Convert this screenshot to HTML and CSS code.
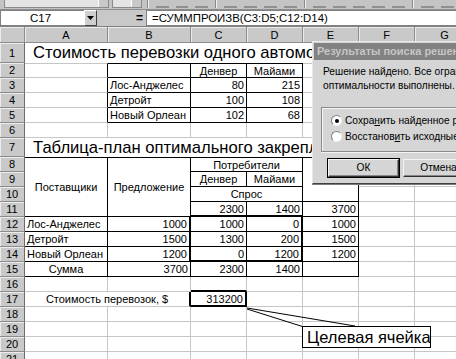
FILE: index.html
```html
<!DOCTYPE html>
<html lang="ru">
<head>
<meta charset="utf-8">
<title>Excel — Поиск решения</title>
<link rel="stylesheet" href="styles.css">
</head>
<body>
<div class="app">
  <div class="toolbar">
    <div class="tb-combo font-combo"><span class="tb-arrow"></span></div>
    <div class="tb-combo size-combo"><span class="tb-arrow"></span></div>
    <div class="tb-sep"></div>
    <div class="tb-btn"></div><div class="tb-btn"></div><div class="tb-btn"></div>
    <div class="tb-sep"></div>
    <div class="tb-btn"></div><div class="tb-btn"></div><div class="tb-btn"></div><div class="tb-btn"></div>
    <div class="tb-sep"></div>
    <div class="tb-btn"></div><div class="tb-btn"></div><div class="tb-btn"></div><div class="tb-btn"></div><div class="tb-btn"></div>
    <div class="tb-sep"></div>
    <div class="tb-btn"></div><div class="tb-btn"></div>
  </div>

  <div class="formula-bar">
    <div class="namebox">C17</div>
    <div class="nb-btn"><svg width="7" height="4" viewBox="0 0 7 4"><path d="M0 0h7L3.5 4z" fill="#000"/></svg></div>
    <div class="fx-gap"></div>
    <div class="fx-eq">=</div>
    <div class="fx">=СУММПРОИЗВ(C3:D5;C12:D14)</div>
  </div>

  <div class="sheet">
    <div class="corner"></div>
    <div class="ch">A</div><div class="ch">B</div><div class="ch">C</div><div class="ch">D</div><div class="ch">E</div><div class="ch">F</div><div class="ch">G</div>

    <div class="rh">1</div>
    <div class="c title span7">Стоимость перевозки одного автомобиля</div>

    <div class="rh">2</div>
    <div class="c t r"></div><div class="c tk r b"></div><div class="c tk r b ctr">Денвер</div><div class="c tk r b ctr">Майами</div><div class="c t"></div><div class="c t"></div><div class="c t"></div>

    <div class="rh">3</div>
    <div class="c r"></div><div class="c r b">Лос-Анджелес</div><div class="c r b num">80</div><div class="c r b num">215</div><div class="c"></div><div class="c"></div><div class="c"></div>

    <div class="rh">4</div>
    <div class="c r"></div><div class="c r b">Детройт</div><div class="c r b num">100</div><div class="c r b num">108</div><div class="c"></div><div class="c"></div><div class="c"></div>

    <div class="rh">5</div>
    <div class="c r"></div><div class="c r b">Новый Орлеан</div><div class="c r b num">102</div><div class="c r b num">68</div><div class="c"></div><div class="c"></div><div class="c"></div>

    <div class="rh">6</div>
    <div class="c"></div><div class="c"></div><div class="c"></div><div class="c"></div><div class="c"></div><div class="c"></div><div class="c"></div>

    <div class="rh">7</div>
    <div class="c title span7">Таблица-план оптимального закрепления</div>

    <div class="rh">8</div>
    <div class="c tk r b ctr rs4">Поставщики</div>
    <div class="c tk r b ctr rs4">Предложение</div>
    <div class="c tk r b ctr cs2">Потребители</div>
    <div class="c tk r b rs3"></div>
    <div class="c t"></div><div class="c t"></div>

    <div class="rh">9</div>
    <div class="c r b ctr">Денвер</div><div class="c r b ctr">Майами</div><div class="c"></div><div class="c"></div>

    <div class="rh">10</div>
    <div class="c r b ctr cs2">Спрос</div><div class="c"></div><div class="c"></div>

    <div class="rh">11</div>
    <div class="c r B num">2300</div><div class="c r B num">1400</div><div class="c r b num">3700</div><div class="c"></div><div class="c"></div>

    <div class="rh">12</div>
    <div class="c r b">Лос-Анджелес</div><div class="c R b num">1000</div><div class="c r b num">1000</div><div class="c R b num">0</div><div class="c r b num">1000</div><div class="c"></div><div class="c"></div>

    <div class="rh">13</div>
    <div class="c r b">Детройт</div><div class="c R b num">1500</div><div class="c r b num">1300</div><div class="c R b num">200</div><div class="c r b num">1500</div><div class="c"></div><div class="c"></div>

    <div class="rh">14</div>
    <div class="c r b">Новый Орлеан</div><div class="c R b num">1200</div><div class="c r B num">0</div><div class="c R B num">1200</div><div class="c r b num">1200</div><div class="c"></div><div class="c"></div>

    <div class="rh">15</div>
    <div class="c r b ctr">Сумма</div><div class="c r b num">3700</div><div class="c r b num">2300</div><div class="c r b num">1400</div><div class="c r b"></div><div class="c"></div><div class="c"></div>

    <div class="rh">16</div>
    <div class="c"></div><div class="c"></div><div class="c B"></div><div class="c"></div><div class="c"></div><div class="c"></div><div class="c"></div>

    <div class="rh">17</div>
    <div class="c R ctr cs2">Стоимость перевозок, $</div><div class="c R B num">313200</div><div class="c"></div><div class="c"></div><div class="c"></div><div class="c"></div>

    <div class="rh">18</div>
    <div class="c"></div><div class="c"></div><div class="c"></div><div class="c"></div><div class="c"></div><div class="c"></div><div class="c"></div>
    <div class="rh">19</div>
    <div class="c"></div><div class="c"></div><div class="c"></div><div class="c"></div><div class="c"></div><div class="c"></div><div class="c"></div>
    <div class="rh">20</div>
    <div class="c"></div><div class="c"></div><div class="c"></div><div class="c"></div><div class="c"></div><div class="c"></div><div class="c"></div>
    <div class="rh">21</div>
    <div class="c"></div><div class="c"></div><div class="c"></div><div class="c"></div><div class="c"></div><div class="c"></div><div class="c"></div>
  </div>

  <div class="dialog">
    <div class="dlg-title">Результаты поиска решения</div>
    <div class="dlg-body">
      <div class="dlg-msg">Решение найдено. Все ограничения и условия<br>оптимальности выполнены.</div>
      <div class="dlg-group">
        <div class="radio-row"><span class="radio on"></span><span>Сохра<u>н</u>ить найденное решение</span></div>
        <div class="radio-row"><span class="radio"></span><span>Восстанов<u>и</u>ть исходные значения</span></div>
      </div>
      <div class="dlg-buttons">
        <div class="btn default">ОК</div>
        <div class="btn">Отмена</div>
      </div>
    </div>
  </div>

  <svg class="callout-lines" width="456" height="359" viewBox="0 0 456 359">
    <path d="M247 308 L355 326 M247 309 L304 327" stroke="#000" stroke-width="1" fill="none"/>
  </svg>
  <div class="callout">Целевая ячейка</div>
</div>
</body>
</html>
```

FILE: styles.css
```css
* { box-sizing: border-box; }

html, body {
  margin: 0;
  padding: 0;
  background: #fff;
  overflow: hidden;
}

.app {
  position: relative;
  width: 456px;
  height: 359px;
  overflow: hidden;
  font-family: "Liberation Sans", Arial, sans-serif;
  color: #000;
}

/* toolbar strip (cut at the top) */
.toolbar {
  height: 10px;
  background: #c4c4c4;
  display: flex;
  align-items: flex-end;
  gap: 3px;
  padding: 0 0 1px 4px;
  border-bottom: 1px solid #8c8c8c;
}
.tb-combo {
  height: 8px;
  background: #e4e4e4;
  border: 1px solid #8a8a8a;
  border-top: none;
  position: relative;
}
.font-combo { width: 114px; }
.size-combo { width: 32px; }
.tb-arrow {
  position: absolute;
  right: 0;
  top: 0;
  width: 10px;
  height: 7px;
  background: #c8c8c8;
  border-left: 1px solid #fff;
}
.tb-sep {
  width: 2px;
  height: 8px;
  border-left: 1px solid #8a8a8a;
  border-right: 1px solid #f0f0f0;
  margin: 0 2px;
}
.tb-btn {
  width: 14px;
  height: 6px;
  border-bottom: 2px solid #6e6e6e;
  margin: 0 2px;
  opacity: 0.6;
}

/* formula bar */
.formula-bar {
  height: 17px;
  display: flex;
  background: #c8c8c8;
  border-bottom: 1px solid #808080;
}
.namebox {
  width: 84px;
  background: #fff;
  border: 1px solid #808080;
  border-right: none;
  font-size: 11.5px;
  text-align: center;
  line-height: 15px;
  padding-right: 4px;
}
.nb-btn {
  width: 13px;
  background: #cfcfcf;
  border: 1px solid #fff;
  border-right-color: #404040;
  border-bottom-color: #404040;
  display: flex;
  align-items: center;
  justify-content: center;
}
.fx-gap { width: 36px; }
.fx-eq {
  width: 13px;
  font-weight: bold;
  font-size: 12px;
  line-height: 16px;
  text-align: center;
}
.fx {
  flex: 1;
  background: #fff;
  border: 1px solid #808080;
  border-right: none;
  font-size: 11.4px;
  line-height: 15px;
  padding-left: 5px;
  white-space: nowrap;
}

/* sheet grid */
.sheet {
  display: grid;
  grid-template-columns: 25px 83px 83px 56px 56px 56px 56px 60px;
  grid-template-rows: 16px 20px repeat(5, 15px) 19px repeat(14, 15px);
  width: 475px;
  font-size: 11px;
}
.corner, .ch, .rh {
  background: #c9c9c9;
  border-right: 1px solid #8c8c8c;
  border-bottom: 1px solid #8c8c8c;
  box-shadow: inset 1px 1px 0 #ececec;
}
.ch {
  display: flex;
  align-items: center;
  justify-content: center;
  font-size: 11px;
}
.rh {
  display: flex;
  align-items: center;
  justify-content: center;
  font-size: 11px;
  border-right-color: #6c6c6c;
}
.c {
  border-right: 1px solid #c6c6c6;
  border-bottom: 1px solid #c6c6c6;
  display: flex;
  align-items: center;
  padding: 0 2px;
  white-space: nowrap;
  overflow: hidden;
  min-width: 0;
}
.title {
  font-size: 16.6px;
  padding-left: 8px;
  border-right: none;
  border-bottom: none;
  overflow: visible;
}
.span7 { grid-column: span 7; }
.cs2 { grid-column: span 2; }
.rs4 { grid-row: span 4; }
.rs3 { grid-row: span 3; }

.t { border-top: 1px solid #c6c6c6; }
.tk { border-top: 1px solid #000; }
.r { border-right: 1px solid #000; }
.b { border-bottom: 1px solid #000; }
.R { border-right: 2px solid #000; }
.B { border-bottom: 2px solid #000; }

.num { justify-content: flex-end; }
.ctr { justify-content: center; }

/* solver dialog */
.dialog {
  position: absolute;
  left: 312px;
  top: 41px;
  width: 170px;
  height: 143px;
  background: #d5d5d5;
  border: 1px solid #e8e8e8;
  border-right-color: #404040;
  border-bottom-color: #404040;
  box-shadow: 0 1px 0 #7a7a7a;
  font-family: "Liberation Sans", Arial, sans-serif;
}
.dlg-title {
  height: 17px;
  background: #828282;
  color: #c6c6c6;
  font-weight: bold;
  font-size: 11px;
  line-height: 17px;
  padding-left: 3px;
  white-space: nowrap;
  margin: 1px 0 0 1px;
}
.dlg-body {
  padding: 5px 0 0 10px;
  font-size: 10.2px;
}
.dlg-msg {
  line-height: 14px;
  white-space: nowrap;
}
.dlg-group {
  margin: 14px 0 0 -2px;
  height: 45px;
  border: 1px solid #8a8a8a;
  border-right: none;
  box-shadow: inset 1px 1px 0 #f4f4f4, 0 1px 0 #f4f4f4;
  padding: 6px 0 0 9px;
  display: flex;
  flex-direction: column;
  gap: 3px;
}
.radio-row {
  display: flex;
  align-items: center;
  gap: 3px;
  white-space: nowrap;
  height: 13px;
}
.radio {
  width: 11px;
  height: 11px;
  border-radius: 50%;
  background: #fff;
  border: 1px solid #808080;
  border-right-color: #f0f0f0;
  border-bottom-color: #f0f0f0;
  flex: none;
  position: relative;
}
.radio.on::after {
  content: "";
  position: absolute;
  left: 3px;
  top: 3px;
  width: 4px;
  height: 4px;
  border-radius: 50%;
  background: #000;
}
.dlg-buttons {
  display: flex;
  gap: 4px;
  margin: 7px 0 0 5px;
}
.btn {
  width: 71px;
  height: 18px;
  flex: none;
  background: #d5d5d5;
  border: 1px solid #f4f4f4;
  border-right-color: #303030;
  border-bottom-color: #303030;
  box-shadow: inset -1px -1px 0 #888;
  text-align: center;
  line-height: 15px;
  font-size: 10.2px;
}
.btn.default {
  outline: 1px solid #000;
}

/* callout */
.callout-lines {
  position: absolute;
  left: 0;
  top: 0;
  pointer-events: none;
}
.callout {
  position: absolute;
  left: 302px;
  top: 326px;
  width: 129px;
  height: 22px;
  background: #fff;
  border: 1px solid #000;
  font-size: 16.5px;
  line-height: 20px;
  padding-left: 4px;
  white-space: nowrap;
}
```
